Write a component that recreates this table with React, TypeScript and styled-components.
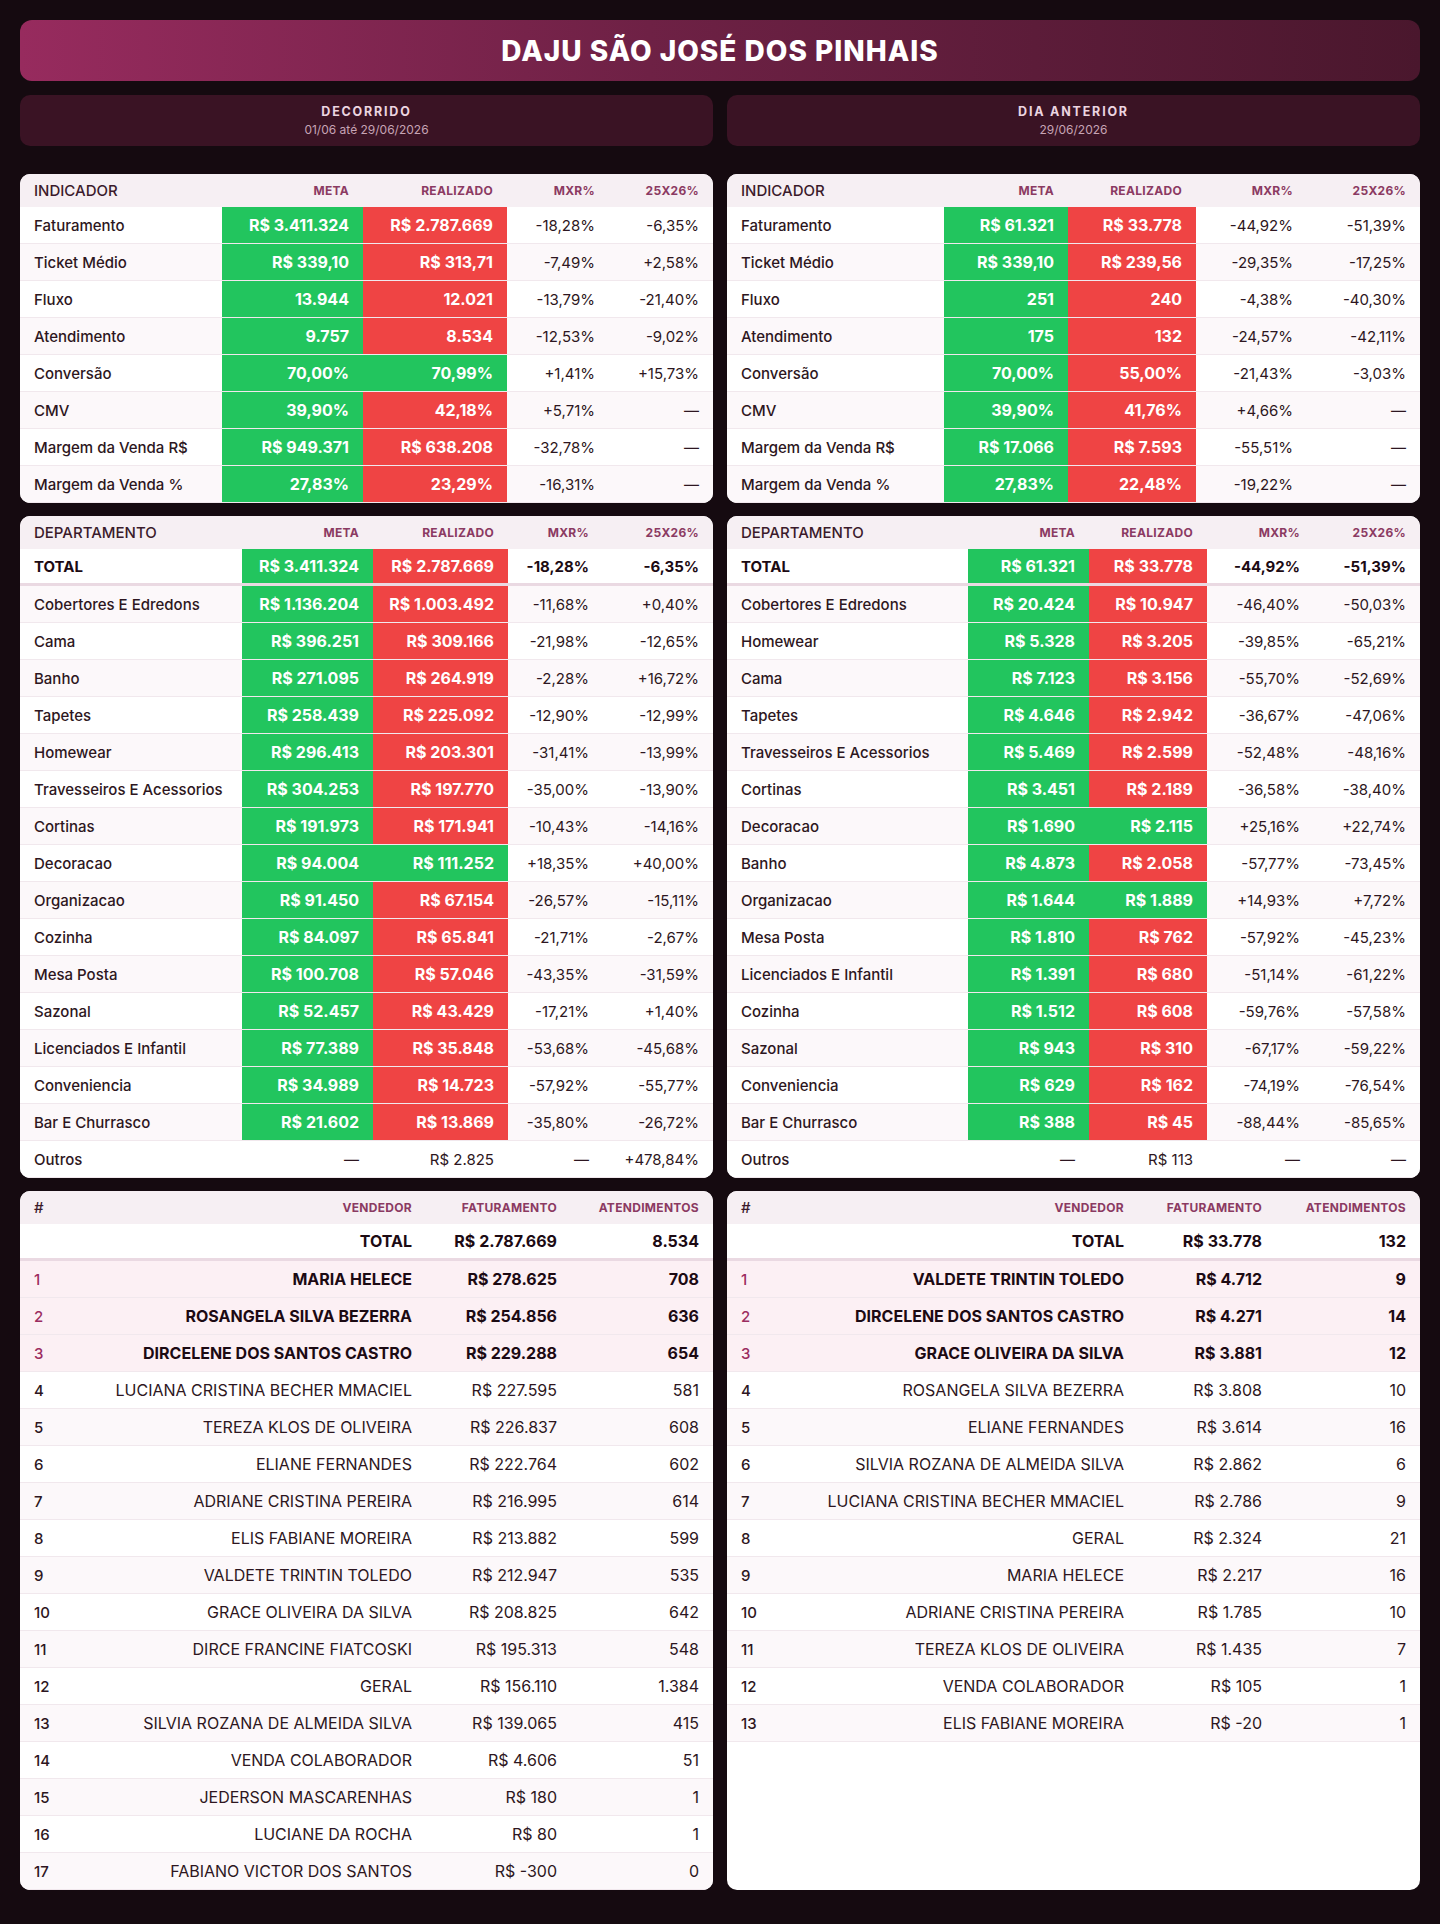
import styled, { createGlobalStyle } from 'styled-components';

type Tone = 'g' | 'r' | null;

interface IMetricRow {
  label: string;
  meta: string;
  real: string;
  metaTone: Tone;
  realTone: Tone;
  mxr: string;
  yoy: string;
}

interface ISeller {
  name: string;
  value: string;
  count: string;
}

const GlobalStyle = createGlobalStyle`
  html, body {
    margin: 0;
    background: #150a10;
  }
  body {
    font-family: Inter, "Noto Sans", sans-serif;
    color: #2d1621;
    -webkit-font-smoothing: antialiased;
  }
`;

const m = (
  label: string,
  meta: string,
  real: string,
  realTone: Tone,
  mxr: string,
  yoy: string,
  metaTone: Tone = 'g'
): IMetricRow => ({ label, meta, real, metaTone, realTone, mxr, yoy });

const indicatorsLeft: IMetricRow[] = [
  m('Faturamento', 'R$ 3.411.324', 'R$ 2.787.669', 'r', '-18,28%', '-6,35%'),
  m('Ticket Médio', 'R$ 339,10', 'R$ 313,71', 'r', '-7,49%', '+2,58%'),
  m('Fluxo', '13.944', '12.021', 'r', '-13,79%', '-21,40%'),
  m('Atendimento', '9.757', '8.534', 'r', '-12,53%', '-9,02%'),
  m('Conversão', '70,00%', '70,99%', 'g', '+1,41%', '+15,73%'),
  m('CMV', '39,90%', '42,18%', 'r', '+5,71%', '—'),
  m('Margem da Venda R$', 'R$ 949.371', 'R$ 638.208', 'r', '-32,78%', '—'),
  m('Margem da Venda %', '27,83%', '23,29%', 'r', '-16,31%', '—'),
];

const indicatorsRight: IMetricRow[] = [
  m('Faturamento', 'R$ 61.321', 'R$ 33.778', 'r', '-44,92%', '-51,39%'),
  m('Ticket Médio', 'R$ 339,10', 'R$ 239,56', 'r', '-29,35%', '-17,25%'),
  m('Fluxo', '251', '240', 'r', '-4,38%', '-40,30%'),
  m('Atendimento', '175', '132', 'r', '-24,57%', '-42,11%'),
  m('Conversão', '70,00%', '55,00%', 'r', '-21,43%', '-3,03%'),
  m('CMV', '39,90%', '41,76%', 'r', '+4,66%', '—'),
  m('Margem da Venda R$', 'R$ 17.066', 'R$ 7.593', 'r', '-55,51%', '—'),
  m('Margem da Venda %', '27,83%', '22,48%', 'r', '-19,22%', '—'),
];

const deptLeft: IMetricRow[] = [
  m('TOTAL', 'R$ 3.411.324', 'R$ 2.787.669', 'r', '-18,28%', '-6,35%'),
  m('Cobertores E Edredons', 'R$ 1.136.204', 'R$ 1.003.492', 'r', '-11,68%', '+0,40%'),
  m('Cama', 'R$ 396.251', 'R$ 309.166', 'r', '-21,98%', '-12,65%'),
  m('Banho', 'R$ 271.095', 'R$ 264.919', 'r', '-2,28%', '+16,72%'),
  m('Tapetes', 'R$ 258.439', 'R$ 225.092', 'r', '-12,90%', '-12,99%'),
  m('Homewear', 'R$ 296.413', 'R$ 203.301', 'r', '-31,41%', '-13,99%'),
  m('Travesseiros E Acessorios', 'R$ 304.253', 'R$ 197.770', 'r', '-35,00%', '-13,90%'),
  m('Cortinas', 'R$ 191.973', 'R$ 171.941', 'r', '-10,43%', '-14,16%'),
  m('Decoracao', 'R$ 94.004', 'R$ 111.252', 'g', '+18,35%', '+40,00%'),
  m('Organizacao', 'R$ 91.450', 'R$ 67.154', 'r', '-26,57%', '-15,11%'),
  m('Cozinha', 'R$ 84.097', 'R$ 65.841', 'r', '-21,71%', '-2,67%'),
  m('Mesa Posta', 'R$ 100.708', 'R$ 57.046', 'r', '-43,35%', '-31,59%'),
  m('Sazonal', 'R$ 52.457', 'R$ 43.429', 'r', '-17,21%', '+1,40%'),
  m('Licenciados E Infantil', 'R$ 77.389', 'R$ 35.848', 'r', '-53,68%', '-45,68%'),
  m('Conveniencia', 'R$ 34.989', 'R$ 14.723', 'r', '-57,92%', '-55,77%'),
  m('Bar E Churrasco', 'R$ 21.602', 'R$ 13.869', 'r', '-35,80%', '-26,72%'),
  m('Outros', '—', 'R$ 2.825', null, '—', '+478,84%', null),
];

const deptRight: IMetricRow[] = [
  m('TOTAL', 'R$ 61.321', 'R$ 33.778', 'r', '-44,92%', '-51,39%'),
  m('Cobertores E Edredons', 'R$ 20.424', 'R$ 10.947', 'r', '-46,40%', '-50,03%'),
  m('Homewear', 'R$ 5.328', 'R$ 3.205', 'r', '-39,85%', '-65,21%'),
  m('Cama', 'R$ 7.123', 'R$ 3.156', 'r', '-55,70%', '-52,69%'),
  m('Tapetes', 'R$ 4.646', 'R$ 2.942', 'r', '-36,67%', '-47,06%'),
  m('Travesseiros E Acessorios', 'R$ 5.469', 'R$ 2.599', 'r', '-52,48%', '-48,16%'),
  m('Cortinas', 'R$ 3.451', 'R$ 2.189', 'r', '-36,58%', '-38,40%'),
  m('Decoracao', 'R$ 1.690', 'R$ 2.115', 'g', '+25,16%', '+22,74%'),
  m('Banho', 'R$ 4.873', 'R$ 2.058', 'r', '-57,77%', '-73,45%'),
  m('Organizacao', 'R$ 1.644', 'R$ 1.889', 'g', '+14,93%', '+7,72%'),
  m('Mesa Posta', 'R$ 1.810', 'R$ 762', 'r', '-57,92%', '-45,23%'),
  m('Licenciados E Infantil', 'R$ 1.391', 'R$ 680', 'r', '-51,14%', '-61,22%'),
  m('Cozinha', 'R$ 1.512', 'R$ 608', 'r', '-59,76%', '-57,58%'),
  m('Sazonal', 'R$ 943', 'R$ 310', 'r', '-67,17%', '-59,22%'),
  m('Conveniencia', 'R$ 629', 'R$ 162', 'r', '-74,19%', '-76,54%'),
  m('Bar E Churrasco', 'R$ 388', 'R$ 45', 'r', '-88,44%', '-85,65%'),
  m('Outros', '—', 'R$ 113', null, '—', '—', null),
];

const s = (name: string, value: string, count: string): ISeller => ({ name, value, count });

const sellersLeft = {
  total: s('TOTAL', 'R$ 2.787.669', '8.534'),
  rows: [
    s('MARIA HELECE', 'R$ 278.625', '708'),
    s('ROSANGELA SILVA BEZERRA', 'R$ 254.856', '636'),
    s('DIRCELENE DOS SANTOS CASTRO', 'R$ 229.288', '654'),
    s('LUCIANA CRISTINA BECHER MMACIEL', 'R$ 227.595', '581'),
    s('TEREZA KLOS DE OLIVEIRA', 'R$ 226.837', '608'),
    s('ELIANE FERNANDES', 'R$ 222.764', '602'),
    s('ADRIANE CRISTINA PEREIRA', 'R$ 216.995', '614'),
    s('ELIS FABIANE MOREIRA', 'R$ 213.882', '599'),
    s('VALDETE TRINTIN TOLEDO', 'R$ 212.947', '535'),
    s('GRACE OLIVEIRA DA SILVA', 'R$ 208.825', '642'),
    s('DIRCE FRANCINE FIATCOSKI', 'R$ 195.313', '548'),
    s('GERAL', 'R$ 156.110', '1.384'),
    s('SILVIA ROZANA DE ALMEIDA SILVA', 'R$ 139.065', '415'),
    s('VENDA COLABORADOR', 'R$ 4.606', '51'),
    s('JEDERSON MASCARENHAS', 'R$ 180', '1'),
    s('LUCIANE DA ROCHA', 'R$ 80', '1'),
    s('FABIANO VICTOR DOS SANTOS', 'R$ -300', '0'),
  ],
};

const sellersRight = {
  total: s('TOTAL', 'R$ 33.778', '132'),
  rows: [
    s('VALDETE TRINTIN TOLEDO', 'R$ 4.712', '9'),
    s('DIRCELENE DOS SANTOS CASTRO', 'R$ 4.271', '14'),
    s('GRACE OLIVEIRA DA SILVA', 'R$ 3.881', '12'),
    s('ROSANGELA SILVA BEZERRA', 'R$ 3.808', '10'),
    s('ELIANE FERNANDES', 'R$ 3.614', '16'),
    s('SILVIA ROZANA DE ALMEIDA SILVA', 'R$ 2.862', '6'),
    s('LUCIANA CRISTINA BECHER MMACIEL', 'R$ 2.786', '9'),
    s('GERAL', 'R$ 2.324', '21'),
    s('MARIA HELECE', 'R$ 2.217', '16'),
    s('ADRIANE CRISTINA PEREIRA', 'R$ 1.785', '10'),
    s('TEREZA KLOS DE OLIVEIRA', 'R$ 1.435', '7'),
    s('VENDA COLABORADOR', 'R$ 105', '1'),
    s('ELIS FABIANE MOREIRA', 'R$ -20', '1'),
  ],
};

interface IMetricTableProps {
  title: string;
  cols: string;
  rows: IMetricRow[];
  hasTotal?: boolean;
}

const MetricTable: React.FC<IMetricTableProps> = (props) => {
  const { title, cols, rows, hasTotal } = props;

  return (
    <Card>
      <HeadRow $cols={cols}>
        <HeadLabel>{title}</HeadLabel>
        <HeadCell>META</HeadCell>
        <HeadCell>REALIZADO</HeadCell>
        <HeadCell>MXR%</HeadCell>
        <HeadCell>25X26%</HeadCell>
      </HeadRow>
      {rows.map((row, i) => {
        const isTotal = !!hasTotal && i === 0;
        return (
          <Row key={row.label} $cols={cols} $alt={i % 2 === 1} $total={isTotal}>
            <Label $strong={isTotal}>{row.label}</Label>
            <Value $tone={row.metaTone}>{row.meta}</Value>
            <Value $tone={row.realTone}>{row.real}</Value>
            <Percent $strong={isTotal}>{row.mxr}</Percent>
            <Percent $strong={isTotal}>{row.yoy}</Percent>
          </Row>
        );
      })}
    </Card>
  );
};

interface ISellerTableProps {
  cols: string;
  total: ISeller;
  rows: ISeller[];
}

const SellerTable: React.FC<ISellerTableProps> = (props) => {
  const { cols, total, rows } = props;

  return (
    <Card>
      <HeadRow $cols={cols}>
        <HeadLabel>#</HeadLabel>
        <HeadCell>VENDEDOR</HeadCell>
        <HeadCell>FATURAMENTO</HeadCell>
        <HeadCell>ATENDIMENTOS</HeadCell>
      </HeadRow>
      <Row $cols={cols} $total>
        <Rank />
        <SellerCell $strong>{total.name}</SellerCell>
        <SellerCell $strong>{total.value}</SellerCell>
        <SellerCell $strong>{total.count}</SellerCell>
      </Row>
      {rows.map((row, i) => {
        const top = i < 3;
        return (
          <Row key={row.name} $cols={cols} $alt={(i + 1) % 2 === 1} $top={top}>
            <Rank $top={top}>{i + 1}</Rank>
            <SellerCell $strong={top}>{row.name}</SellerCell>
            <SellerCell $strong={top}>{row.value}</SellerCell>
            <SellerCell $strong={top}>{row.count}</SellerCell>
          </Row>
        );
      })}
    </Card>
  );
};

const App: React.FC = () => {
  return (
    <Page>
      <GlobalStyle />
      <TitleBar>
        <Title>DAJU SÃO JOSÉ DOS PINHAIS</Title>
      </TitleBar>
      <Board>
        <Period>
          <div className="name">DECORRIDO</div>
          <div className="range">01/06 até 29/06/2026</div>
        </Period>
        <Period>
          <div className="name">DIA ANTERIOR</div>
          <div className="range">29/06/2026</div>
        </Period>

        <MetricTable title="INDICADOR" cols="202px 141px 144px 102px 1fr" rows={indicatorsLeft} />
        <MetricTable title="INDICADOR" cols="217px 124px 128px 111px 1fr" rows={indicatorsRight} />

        <MetricTable title="DEPARTAMENTO" cols="222px 131px 135px 95px 1fr" rows={deptLeft} hasTotal />
        <MetricTable title="DEPARTAMENTO" cols="241px 121px 118px 107px 1fr" rows={deptRight} hasTotal />

        <SellerTable cols="60px 346px 145px 1fr" total={sellersLeft.total} rows={sellersLeft.rows} />
        <SellerTable cols="60px 351px 138px 1fr" total={sellersRight.total} rows={sellersRight.rows} />
      </Board>
    </Page>
  );
};

const Page = styled.div`
  padding: 20px 20px 33px;
  display: flex;
  flex-direction: column;
  gap: 14px;
`;

const TitleBar = styled.div`
  height: 61px;
  border-radius: 12px;
  background: linear-gradient(90deg, #972b5e 0%, #6e2145 45%, #4a172d 100%);
  display: flex;
  align-items: center;
  justify-content: center;
`;

const Title = styled.h1`
  margin: 0;
  color: #fff;
  font-size: 28px;
  font-weight: 800;
  letter-spacing: 1px;
`;

const Board = styled.div`
  display: grid;
  grid-template-columns: 1fr 1fr;
  column-gap: 14px;
  row-gap: 13px;
  align-items: stretch;
`;

const Period = styled.div`
  height: 51px;
  margin-bottom: 15px;
  border-radius: 10px;
  background: #3a1324;
  display: flex;
  flex-direction: column;
  align-items: center;
  justify-content: center;
  gap: 3px;

  .name {
    color: #ecd5e0;
    font-size: 12.5px;
    font-weight: 700;
    letter-spacing: 1.8px;
  }

  .range {
    color: #c7a4b5;
    font-size: 12px;
  }
`;

const Card = styled.div`
  background: #fff;
  border-radius: 10px;
  overflow: hidden;
`;

const HeadRow = styled.div<{ $cols: string }>`
  display: grid;
  grid-template-columns: ${(p) => p.$cols};
  height: 33px;
  background: #f6eff3;
`;

const HeadLabel = styled.div`
  display: flex;
  align-items: center;
  padding: 0 14px;
  color: #3b1a2b;
  font-size: 15px;
  font-weight: 500;
`;

const HeadCell = styled.div`
  display: flex;
  align-items: center;
  justify-content: flex-end;
  padding: 0 14px;
  color: #8b3a62;
  font-size: 12px;
  font-weight: 700;
  letter-spacing: 0.3px;
`;

const Row = styled.div<{ $cols: string; $alt?: boolean; $total?: boolean; $top?: boolean }>`
  display: grid;
  grid-template-columns: ${(p) => p.$cols};
  height: 37px;
  box-sizing: border-box;
  background: ${(p) => (p.$top ? '#fcf0f4' : p.$alt ? '#fcf8fa' : '#ffffff')};
  border-bottom: ${(p) => (p.$total ? '3px solid #ead9e2' : '1px solid #f1e8ed')};
`;

const Label = styled.div<{ $strong?: boolean }>`
  display: flex;
  align-items: center;
  padding: 0 14px;
  color: ${(p) => (p.$strong ? '#1c0a13' : '#2d1621')};
  font-size: 15px;
  font-weight: ${(p) => (p.$strong ? 700 : 500)};
  white-space: nowrap;
`;

const Rank = styled.div<{ $top?: boolean }>`
  display: flex;
  align-items: center;
  padding: 0 14px;
  color: ${(p) => (p.$top ? '#9b2c5f' : '#2d1621')};
  font-size: 15px;
  font-weight: 500;
`;

const Cell = styled.div`
  display: flex;
  align-items: center;
  justify-content: flex-end;
  padding: 0 14px;
  white-space: nowrap;
`;

const Value = styled(Cell)<{ $tone: Tone }>`
  font-size: ${(p) => (p.$tone ? '16px' : '15px')};
  font-weight: ${(p) => (p.$tone ? 700 : 400)};
  color: ${(p) => (p.$tone ? '#ffffff' : '#2d1621')};
  background: ${(p) => (p.$tone === 'g' ? '#22c55e' : p.$tone === 'r' ? '#ef4444' : 'transparent')};
`;

const Percent = styled(Cell)<{ $strong?: boolean }>`
  font-size: 15px;
  font-weight: ${(p) => (p.$strong ? 700 : 400)};
  color: ${(p) => (p.$strong ? '#1c0a13' : '#2d1621')};
`;

const SellerCell = styled(Cell)<{ $strong?: boolean }>`
  font-size: 16px;
  font-weight: ${(p) => (p.$strong ? 700 : 400)};
  color: ${(p) => (p.$strong ? '#1c0a13' : '#2d1621')};
`;

export default App;
